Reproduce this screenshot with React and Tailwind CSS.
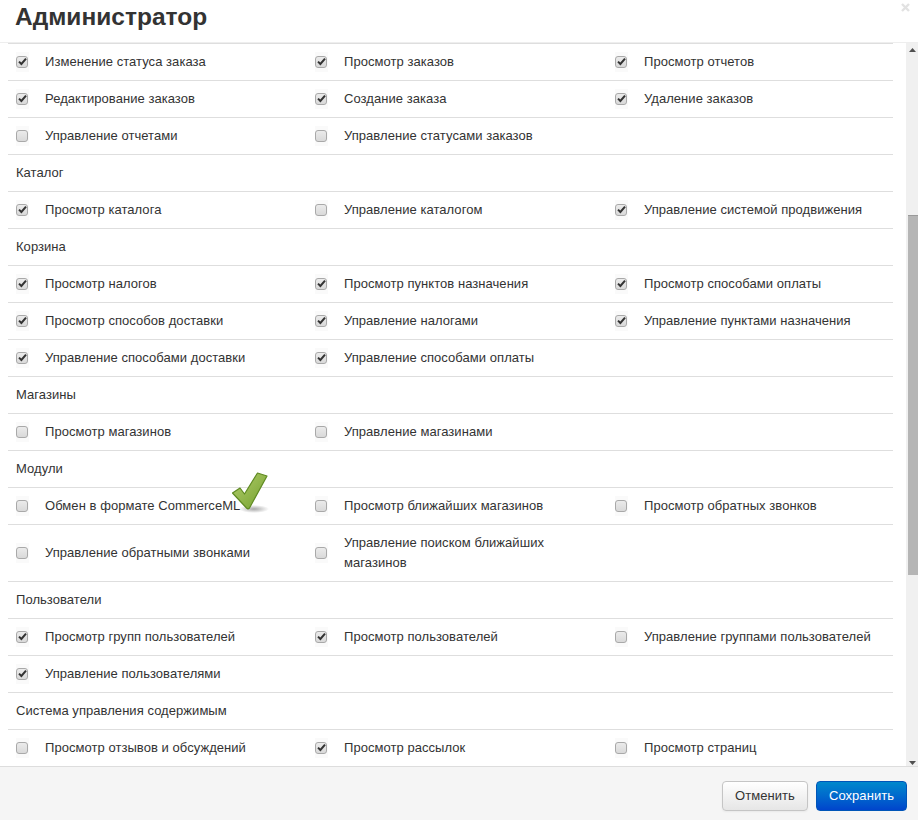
import React from "react";

const rows = [
  { items: [["Изменение статуса заказа", 1], ["Просмотр заказов", 1], ["Просмотр отчетов", 1]] },
  { items: [["Редактирование заказов", 1], ["Создание заказа", 1], ["Удаление заказов", 1]] },
  { items: [["Управление отчетами", 0], ["Управление статусами заказов", 0]] },
  { title: "Каталог" },
  { items: [["Просмотр каталога", 1], ["Управление каталогом", 0], ["Управление системой продвижения", 1]] },
  { title: "Корзина" },
  { items: [["Просмотр налогов", 1], ["Просмотр пунктов назначения", 1], ["Просмотр способами оплаты", 1]] },
  { items: [["Просмотр способов доставки", 1], ["Управление налогами", 1], ["Управление пунктами назначения", 1]] },
  { items: [["Управление способами доставки", 1], ["Управление способами оплаты", 1]] },
  { title: "Магазины" },
  { items: [["Просмотр магазинов", 0], ["Управление магазинами", 0]] },
  { title: "Модули" },
  { items: [["Обмен в формате CommerceML", 0], ["Просмотр ближайших магазинов", 0], ["Просмотр обратных звонков", 0]], badge: true },
  { items: [["Управление обратными звонками", 0], ["Управление поиском ближайших магазинов", 0]] },
  { title: "Пользователи" },
  { items: [["Просмотр групп пользователей", 1], ["Просмотр пользователей", 1], ["Управление группами пользователей", 0]] },
  { items: [["Управление пользователями", 1]] },
  { title: "Система управления содержимым" },
  { items: [["Просмотр отзывов и обсуждений", 0], ["Просмотр рассылок", 1], ["Просмотр страниц", 0]] },
];

const Checkbox = ({ checked }) => (
  <span className="block h-5 w-[13px] shrink-0 bg-[#fafafa] pt-[3.5px]">
    <span className="flex h-[12px] w-[12px] items-center justify-center rounded-[3px] border border-[#a9a9a9] bg-gradient-to-b from-[#ebebeb] to-[#d9d9d9]">
      {checked ? (
        <svg width="9" height="9" viewBox="0 0 9 9">
          <path d="M1 4.6 L3.4 7 L8 1.6" fill="none" stroke="#333" strokeWidth="2" />
        </svg>
      ) : null}
    </span>
  </span>
);

const GreenCheck = () => (
  <span className="absolute left-[222px] top-[-16px]">
    <svg width="50" height="50" viewBox="0 0 50 50">
      <defs>
        <linearGradient id="checkFill" x1="0" y1="0" x2="1" y2="1">
          <stop offset="0" stopColor="#b4ce6e" />
          <stop offset="1" stopColor="#72a02c" />
        </linearGradient>
        <radialGradient id="checkShadow">
          <stop offset="0" stopColor="#8a8a8a" stopOpacity="0.75" />
          <stop offset="1" stopColor="#8a8a8a" stopOpacity="0" />
        </radialGradient>
      </defs>
      <ellipse cx="24" cy="37" rx="15" ry="4" fill="url(#checkShadow)" />
      <path
        d="M2.500 21 L10 16 L14.500 22 L27.500 1 L37 4 L19.500 36 Q18 37.500 16.500 36 Z"
        fill="url(#checkFill)"
        stroke="#5f8a22"
        strokeWidth="1.2"
        strokeLinejoin="round"
      />
    </svg>
  </span>
);

const Row = ({ row }) => (
  <div className="relative border-t border-[#dedede] py-2">
    {row.title ? (
      <div className="pl-2 leading-5">{row.title}</div>
    ) : (
      <div className="grid grid-cols-[299px_300px_1fr] items-center pl-2">
        {row.items.map(([label, checked]) => (
          <label key={label} className="flex items-center">
            <Checkbox checked={checked} />
            <span className="ml-4 max-w-[240px] leading-5">{label}</span>
          </label>
        ))}
      </div>
    )}
    {row.badge ? <GreenCheck /> : null}
  </div>
);

export default function App() {
  return (
    <div className="flex h-[820px] w-[918px] flex-col overflow-hidden bg-white font-['Liberation_Sans',Arial,sans-serif] text-[13px] tracking-[0.05px] text-[#333]">
      <div className="relative h-[43px] shrink-0 border-b border-[#eee]">
        <h1 className="pl-[15px] pt-[2px] text-[24.5px] font-bold leading-[30px] tracking-normal">Администратор</h1>
        <svg className="absolute right-[8px] top-[3px]" width="9" height="9" viewBox="0 0 9 9">
          <path d="M1 1 L8 8 M8 1 L1 8" stroke="#e2e2e2" strokeWidth="2.4" />
        </svg>
      </div>
      <div className="flex h-[723px] shrink-0">
        <div className="w-[893px] shrink-0 overflow-hidden pl-2">
          {rows.map((row, i) => (
            <Row key={i} row={row} />
          ))}
        </div>
        <div className="ml-[13px] flex w-[12px] flex-col bg-[#f0f0f0]">
          <svg className="mt-[5px] shrink-0" width="12" height="4" viewBox="0 0 12 4">
            <path d="M3 4 L6.500 0 L10 4 Z" fill="#505050" />
          </svg>
          <div className="mt-[163px] ml-[2px] h-[360px] shrink-0 border-t border-[#9a9a9a] bg-[#b5b5b5]" />
          <svg className="mt-auto mb-[1px] shrink-0" width="12" height="4" viewBox="0 0 12 4">
            <path d="M3 0 L6.500 4 L10 0 Z" fill="#505050" />
          </svg>
        </div>
      </div>
      <div className="flex flex-1 items-start justify-end gap-2 border-t border-[#ddd] bg-[#f5f5f5] pr-[11px] pt-[14px]">
        <button className="h-[30px] w-[86px] rounded border border-[#c5c5c5] bg-gradient-to-b from-white to-[#e6e6e6] text-[#333] shadow-[0_1px_2px_rgba(0,0,0,0.05)]">
          Отменить
        </button>
        <button className="h-[30px] w-[91px] rounded border border-[#0055b8] bg-gradient-to-b from-[#0088cc] to-[#0044cc] text-white">
          Сохранить
        </button>
      </div>
    </div>
  );
}
